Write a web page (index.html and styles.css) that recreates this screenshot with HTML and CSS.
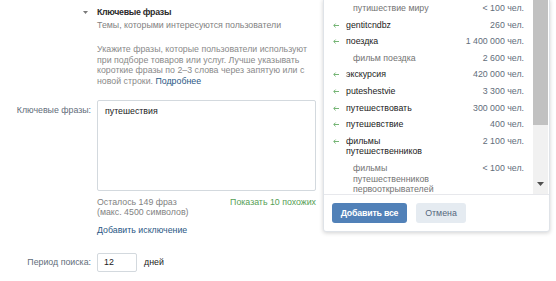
FILE: index.html
```html
<!DOCTYPE html>
<html lang="ru">
<head>
<meta charset="utf-8">
<link rel="stylesheet" href="styles.css">
</head>
<body>
<div class="page">
  <div class="form">
    <div class="row head">
      <div class="lab"><svg class="tri" width="5" height="3" viewBox="0 0 5 3"><path d="M0 0H5L2.5 3Z" fill="#7a7a7a"/></svg></div>
      <div class="ctl">
        <div class="title">Ключевые фразы</div>
        <div class="sub">Темы, которыми интересуются пользователи</div>
        <p class="hint">Укажите фразы, которые пользователи используют при подборе товаров или услуг. Лучше указывать короткие фразы по 2–3 слова через запятую или с новой строки. <a class="link">Подробнее</a></p>
      </div>
    </div>
    <div class="row">
      <div class="lab lab-top">Ключевые фразы:</div>
      <div class="ctl">
        <div class="textarea">путешествия</div>
        <div class="meta">
          <div class="left">Осталось 149 фраз<br>(макс. 4500 символов)</div>
          <a class="green">Показать 10 похожих</a>
        </div>
        <a class="link add">Добавить исключение</a>
      </div>
    </div>
    <div class="row period">
      <div class="lab">Период поиска:</div>
      <div class="ctl inline">
        <div class="input">12</div>
        <span class="unit">дней</span>
      </div>
    </div>
  </div>

  <div class="popup">
    <div class="list">
      <div class="rows">
        <div class="item sub-item"><span class="name">путишествие миру</span><span class="cnt">&lt; 100 чел.</span></div>
        <div class="item"><svg class="arr" width="6" height="5" viewBox="0 0 6 5"><path d="M6 2.5H1M2.6 0.6L0.7 2.5L2.6 4.4" fill="none" stroke="#74b474" stroke-width="1"/></svg><span class="name">gentitcndbz</span><span class="cnt">260 чел.</span></div>
        <div class="item"><svg class="arr" width="6" height="5" viewBox="0 0 6 5"><path d="M6 2.5H1M2.6 0.6L0.7 2.5L2.6 4.4" fill="none" stroke="#74b474" stroke-width="1"/></svg><span class="name">поездка</span><span class="cnt">1 400 000 чел.</span></div>
        <div class="item sub-item"><span class="name">фильм поездка</span><span class="cnt">2 600 чел.</span></div>
        <div class="item"><svg class="arr" width="6" height="5" viewBox="0 0 6 5"><path d="M6 2.5H1M2.6 0.6L0.7 2.5L2.6 4.4" fill="none" stroke="#74b474" stroke-width="1"/></svg><span class="name">экскурсия</span><span class="cnt">420 000 чел.</span></div>
        <div class="item"><svg class="arr" width="6" height="5" viewBox="0 0 6 5"><path d="M6 2.5H1M2.6 0.6L0.7 2.5L2.6 4.4" fill="none" stroke="#74b474" stroke-width="1"/></svg><span class="name">puteshestvie</span><span class="cnt">3 300 чел.</span></div>
        <div class="item"><svg class="arr" width="6" height="5" viewBox="0 0 6 5"><path d="M6 2.5H1M2.6 0.6L0.7 2.5L2.6 4.4" fill="none" stroke="#74b474" stroke-width="1"/></svg><span class="name">путешествовать</span><span class="cnt">300 000 чел.</span></div>
        <div class="item"><svg class="arr" width="6" height="5" viewBox="0 0 6 5"><path d="M6 2.5H1M2.6 0.6L0.7 2.5L2.6 4.4" fill="none" stroke="#74b474" stroke-width="1"/></svg><span class="name">путешевствие</span><span class="cnt">400 чел.</span></div>
        <div class="item"><svg class="arr" width="6" height="5" viewBox="0 0 6 5"><path d="M6 2.5H1M2.6 0.6L0.7 2.5L2.6 4.4" fill="none" stroke="#74b474" stroke-width="1"/></svg><span class="name">фильмы путешественников</span><span class="cnt">2 100 чел.</span></div>
        <div class="item sub-item"><span class="name">фильмы путешественников первооткрывателей</span><span class="cnt">&lt; 100 чел.</span></div>
      </div>
      <div class="scrollbar">
        <div class="thumb"></div>
        <svg class="down" width="7" height="4" viewBox="0 0 7 4"><path d="M0 0H7L3.5 4Z" fill="#505050"/></svg>
      </div>
    </div>
    <div class="foot">
      <button class="btn primary">Добавить все</button>
      <button class="btn secondary">Отмена</button>
    </div>
  </div>
</div>
</body>
</html>
```

FILE: styles.css
```css
html, body {
  margin: 0;
  padding: 0;
  background: #fff;
}
body {
  width: 556px;
  height: 281px;
  overflow: hidden;
  font-family: "Liberation Sans", Arial, sans-serif;
  font-size: 8.8px;
  color: #222;
}
.page {
  position: relative;
  width: 556px;
  height: 281px;
}
.form {
  padding-top: 6px;
  display: flex;
  flex-direction: column;
}
.row {
  display: grid;
  grid-template-columns: 91px 219px;
  column-gap: 6px;
}
.lab {
  text-align: right;
  color: #626d7a;
  line-height: 13px;
}
.lab-top {
  padding-top: 4px;
}
.tri {
  display: block;
  margin: 5px 3px 0 auto;
}
.title {
  font-weight: bold;
  font-size: 8.8px;
  letter-spacing: -0.3px;
  line-height: 13px;
  color: #2b2b2b;
}
.sub {
  line-height: 13px;
  color: #828282;
}
.hint {
  margin: 12px 0 0;
  line-height: 10.6px;
  color: #8a8a8a;
}
.link {
  color: #2a5885;
  text-decoration: none;
}
.head {
  margin-bottom: 13.5px;
}
.textarea {
  box-sizing: border-box;
  height: 91px;
  border: 1px solid #d3d9de;
  border-radius: 2px;
  padding: 4px 7px;
  line-height: 13px;
  color: #222;
}
.meta {
  display: flex;
  justify-content: space-between;
  margin-top: 6px;
  line-height: 10.6px;
}
.meta .left {
  color: #828282;
}
.green {
  color: #55a055;
}
.add {
  display: block;
  margin-top: 7px;
  line-height: 10.6px;
}
.period {
  margin-top: 17px;
  align-items: center;
}
.inline {
  display: flex;
  align-items: center;
}
.input {
  box-sizing: border-box;
  width: 40px;
  height: 19px;
  border: 1px solid #d3d9de;
  border-radius: 2px;
  padding: 0 6px;
  line-height: 17px;
  color: #222;
}
.unit {
  margin-left: 7px;
  color: #222;
}

/* popup */
.popup {
  position: absolute;
  left: 323px;
  top: -1px;
  width: 227px;
  box-sizing: border-box;
  border: 1px solid #dfe3e8;
  border-radius: 0 0 3px 3px;
  background: #fff;
  box-shadow: 0 1px 4px rgba(0, 0, 0, 0.18);
}
.list {
  display: flex;
  height: 194px;
  overflow: hidden;
}
.rows {
  flex: 1;
  padding-right: 9px;
}
.item {
  display: flex;
  align-items: flex-start;
  padding: 3px 0 3px 9px;
  line-height: 10.6px;
  color: #222;
}
.arr {
  flex: none;
  margin: 3px 7px 0 0;
}
.item .name {
  width: 92px;
  flex: none;
}
.item .cnt {
  margin-left: auto;
  color: #626d7a;
  white-space: nowrap;
}
.sub-item {
  padding-left: 29px;
}
.sub-item .name {
  color: #737373;
}
.scrollbar {
  position: relative;
  flex: none;
  width: 15px;
  margin-right: 1px;
  background: #f1f1f1;
}
.thumb {
  height: 125px;
  background: #c1c1c1;
}
.down {
  position: absolute;
  left: 4px;
  bottom: 8px;
}
.foot {
  display: flex;
  gap: 9px;
  padding: 8px 8px;
  border-top: 1px solid #e7e8ec;
}
.btn {
  height: 20px;
  border: 0;
  border-radius: 3px;
  font-family: inherit;
  font-size: 8.8px;
  padding: 0;
  cursor: pointer;
}
.primary {
  width: 75px;
  background: #5181b8;
  color: #fff;
  font-weight: bold;
  letter-spacing: -0.2px;
}
.secondary {
  width: 50px;
  background: #e5ebf1;
  color: #55677d;
}
```
